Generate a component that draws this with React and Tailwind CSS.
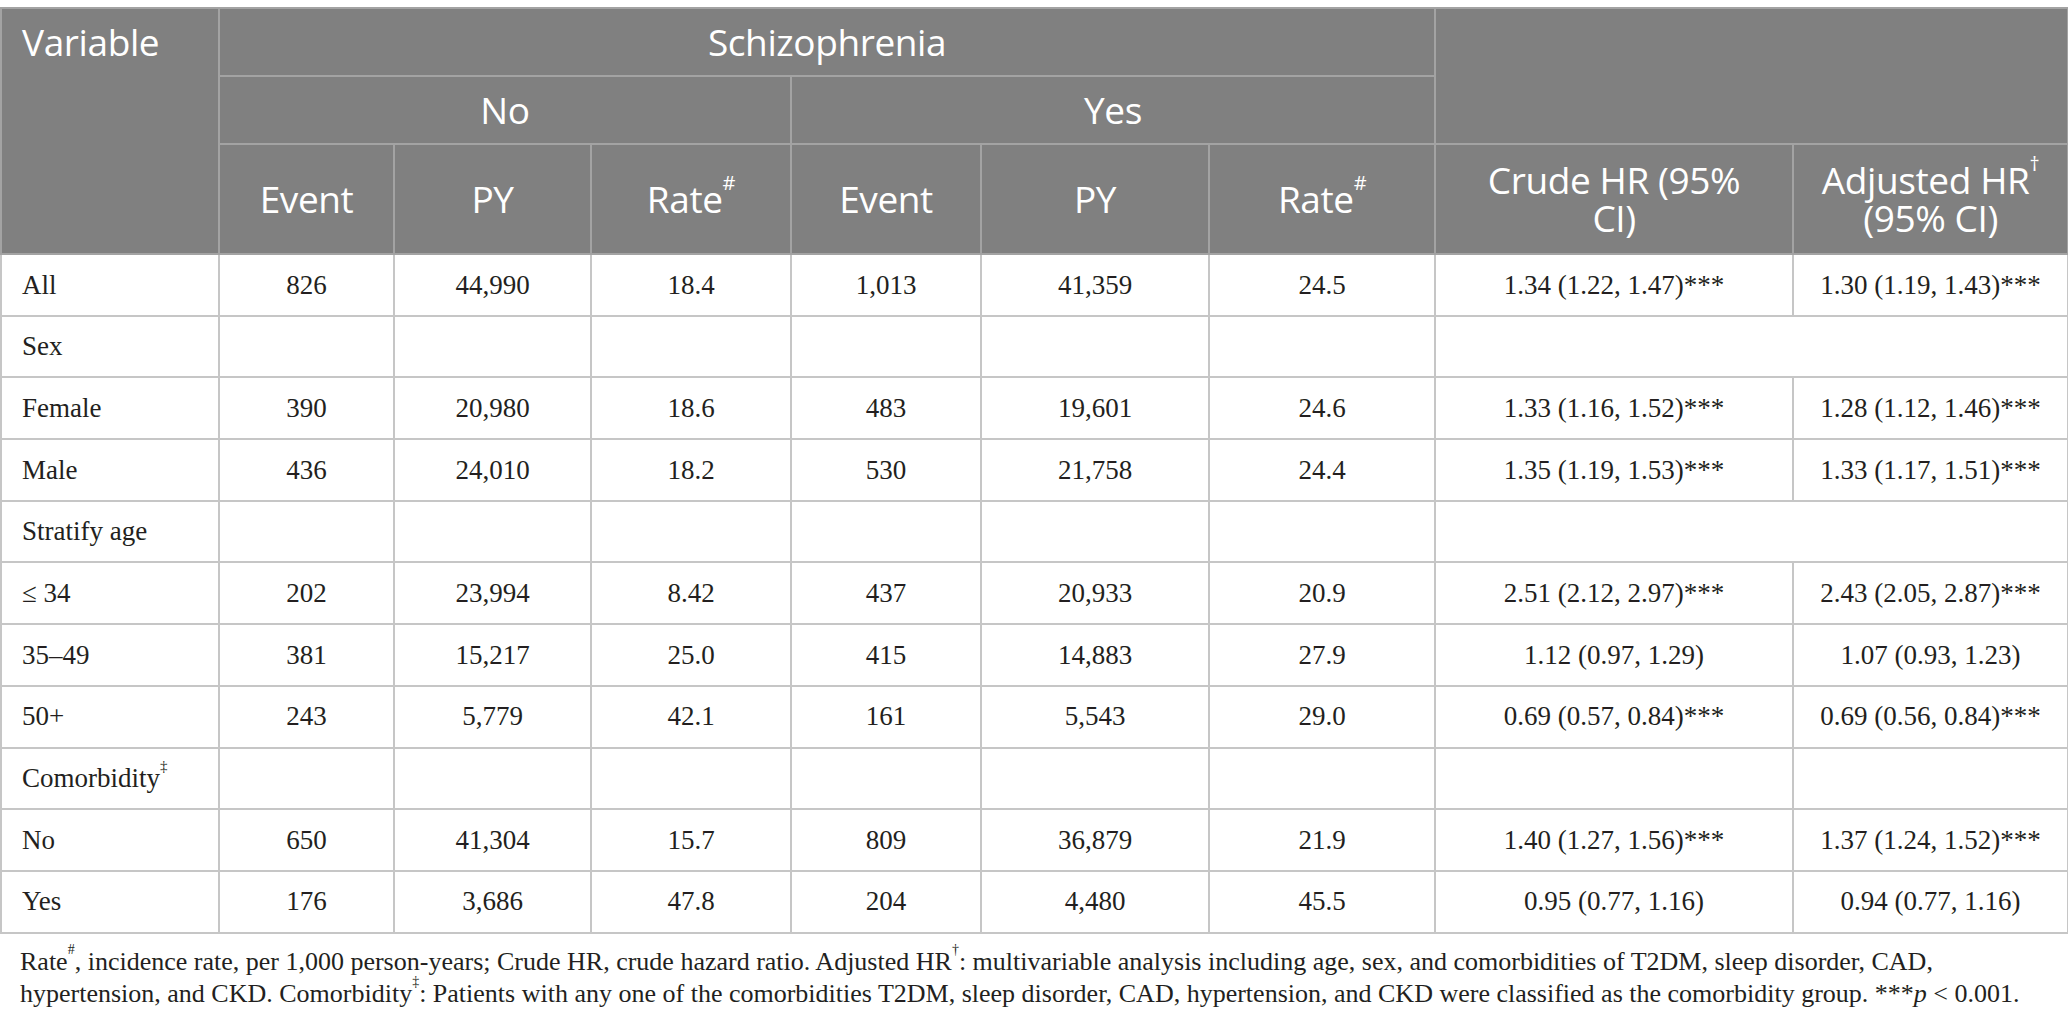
const rows = [
    { label: "All", no: ["826", "44,990", "18.4"], yes: ["1,013", "41,359", "24.5"], crude: "1.34 (1.22, 1.47)***", adj: "1.30 (1.19, 1.43)***" },
    { label: "Sex", group: true, merge: true },
    { label: "Female", no: ["390", "20,980", "18.6"], yes: ["483", "19,601", "24.6"], crude: "1.33 (1.16, 1.52)***", adj: "1.28 (1.12, 1.46)***" },
    { label: "Male", no: ["436", "24,010", "18.2"], yes: ["530", "21,758", "24.4"], crude: "1.35 (1.19, 1.53)***", adj: "1.33 (1.17, 1.51)***" },
    { label: "Stratify age", group: true, merge: true },
    { label: "≤ 34", no: ["202", "23,994", "8.42"], yes: ["437", "20,933", "20.9"], crude: "2.51 (2.12, 2.97)***", adj: "2.43 (2.05, 2.87)***" },
    { label: "35–49", no: ["381", "15,217", "25.0"], yes: ["415", "14,883", "27.9"], crude: "1.12 (0.97, 1.29)", adj: "1.07 (0.93, 1.23)" },
    { label: "50+", no: ["243", "5,779", "42.1"], yes: ["161", "5,543", "29.0"], crude: "0.69 (0.57, 0.84)***", adj: "0.69 (0.56, 0.84)***" },
    { label: <>Comorbidity<sup className="text-[15px] leading-none align-[9px]">‡</sup></>, group: true },
    { label: "No", no: ["650", "41,304", "15.7"], yes: ["809", "36,879", "21.9"], crude: "1.40 (1.27, 1.56)***", adj: "1.37 (1.24, 1.52)***" },
    { label: "Yes", no: ["176", "3,686", "47.8"], yes: ["204", "4,480", "45.5"], crude: "0.95 (0.77, 1.16)", adj: "0.94 (0.77, 1.16)" },
];

const th = "border-2 border-[#a3a3a3] font-normal text-white text-center align-middle";
const td = "border-2 border-[#c6c6c6] text-center align-middle";
const hsup = "text-[20px] leading-none align-[13px]";
const fsup = "text-[14px] leading-none align-[9px]";

export default function App() {
    return (
        <div className="w-[2068px] bg-white pt-[7px] text-[#231f20]">
            <table className="w-[2067px] table-fixed border-collapse">
                <colgroup>
                    <col className="w-[218px]" />
                    <col className="w-[175px]" />
                    <col className="w-[197px]" />
                    <col className="w-[200px]" />
                    <col className="w-[190px]" />
                    <col className="w-[228px]" />
                    <col className="w-[226px]" />
                    <col className="w-[358px]" />
                    <col className="w-[275px]" />
                </colgroup>
                <thead className="bg-[#808080] font-['Open_Sans',sans-serif] text-[37px] leading-[40px] tracking-[-0.4px]">
                    <tr className="h-[68px]">
                        <th rowSpan={3} className={`${th} !text-left !align-top pl-5 pt-[13px]`}>Variable</th>
                        <th colSpan={6} className={th}>Schizophrenia</th>
                        <th colSpan={2} rowSpan={2} className={th}></th>
                    </tr>
                    <tr className="h-[68px]">
                        <th colSpan={3} className={th}>No</th>
                        <th colSpan={3} className={th}>Yes</th>
                    </tr>
                    <tr className="h-[110px]">
                        <th className={th}>Event</th>
                        <th className={th}>PY</th>
                        <th className={th}>Rate<sup className={hsup}>#</sup></th>
                        <th className={th}>Event</th>
                        <th className={th}>PY</th>
                        <th className={th}>Rate<sup className={hsup}>#</sup></th>
                        <th className={`${th} leading-[38px]`}>Crude HR (95%<br />CI)</th>
                        <th className={`${th} leading-[38px]`}>Adjusted HR<sup className={hsup}>†</sup><br />(95% CI)</th>
                    </tr>
                </thead>
                <tbody className="font-['Liberation_Serif',serif] text-[27px]">
                    {rows.map((r, i) => (
                        <tr key={i} className="h-[61.7px]">
                            <td className={`${td} !text-left pl-5`}>{r.label}</td>
                            {r.group ? (
                                <>
                                    {[0, 1, 2, 3, 4, 5].map((k) => (
                                        <td key={k} className={td}></td>
                                    ))}
                                    {r.merge ? (
                                        <td colSpan={2} className={td}></td>
                                    ) : (
                                        <>
                                            <td className={td}></td>
                                            <td className={td}></td>
                                        </>
                                    )}
                                </>
                            ) : (
                                <>
                                    {[...r.no, ...r.yes].map((v, k) => (
                                        <td key={k} className={td}>{v}</td>
                                    ))}
                                    <td className={td}>{r.crude}</td>
                                    <td className={td}>{r.adj}</td>
                                </>
                            )}
                        </tr>
                    ))}
                </tbody>
            </table>
            <p className="pl-5 pt-[12px] font-['Liberation_Serif',serif] text-[26px] leading-[32px] whitespace-nowrap">
                Rate<sup className={fsup}>#</sup>, incidence rate, per 1,000 person-years; Crude HR, crude hazard ratio. Adjusted HR<sup className={fsup}>†</sup>: multivariable analysis including age, sex, and comorbidities of T2DM, sleep disorder, CAD,
                <br />
                hypertension, and CKD. Comorbidity<sup className={fsup}>‡</sup>: Patients with any one of the comorbidities T2DM, sleep disorder, CAD, hypertension, and CKD were classified as the comorbidity group. ***<i>p</i> &lt; 0.001.
            </p>
        </div>
    );
}
